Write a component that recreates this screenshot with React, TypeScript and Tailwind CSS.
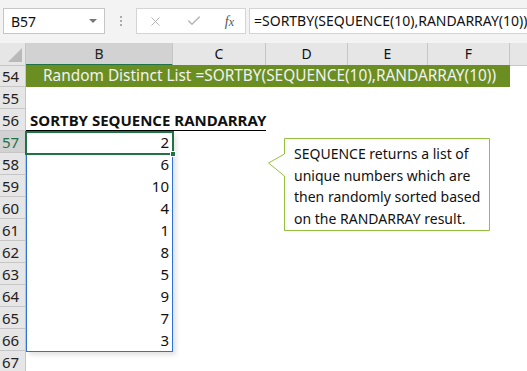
import { X, Check } from 'lucide-react'

// Spreadsheet column widths (row header, then B..F, then the cut-off G)
const cols = 'grid-cols-[26px_147px_93px_82px_80px_82px_1fr]'

const values = [2, 6, 10, 4, 1, 8, 5, 9, 7, 3]

function RowHead({ n, active }: { n: number; active?: boolean }) {
  return (
    <div
      className={
        'h-[22px] border-r border-b border-[#c6c6c6] pl-[2px] text-[15px] leading-[22px] ' +
        (active ? 'bg-[#d2d2d2] text-[#217346]' : 'bg-[#e6e6e6] text-[#222]')
      }
    >
      {n}
    </div>
  )
}

export default function App() {
  return (
    <div className="relative w-[527px] h-[371px] overflow-hidden bg-white font-['Noto_Sans',sans-serif] text-[#111]">
      {/* Formula bar */}
      <div className="h-[43px] bg-[#f3f3f3] flex items-start pt-[8px] pl-[3px]">
        <div className="w-[102px] h-[26px] bg-white border border-[#c6c6c6] flex items-center justify-between px-[7px] text-[14px]">
          <span>B57</span>
          <span className="w-0 h-0 border-l-[4px] border-r-[4px] border-t-[4px] border-l-transparent border-r-transparent border-t-[#777]" />
        </div>
        <div className="w-[31px] h-[26px] flex flex-col items-center justify-center gap-[2px]">
          <span className="w-[2px] h-[2px] bg-[#aaa]" />
          <span className="w-[2px] h-[2px] bg-[#aaa]" />
          <span className="w-[2px] h-[2px] bg-[#aaa]" />
        </div>
        <div className="w-[110px] h-[26px] bg-white border border-[#d4d4d4] flex items-center justify-between pl-[11px] pr-[11px]">
          <X className="w-[15px] h-[15px] text-[#b5b5b5]" strokeWidth={1.6} />
          <Check className="w-[16px] h-[16px] text-[#b5b5b5]" strokeWidth={2.2} />
          <span className="font-['Liberation_Serif',serif] italic text-[14px] text-[#555]">
            f<span className="text-[12px]">x</span>
          </span>
        </div>
        <div className="ml-[3px] flex-1 h-[26px] bg-white border border-[#d4d4d4] border-r-0 pl-[4px] text-[14px] leading-[24px] whitespace-nowrap overflow-hidden">
          =SORTBY(SEQUENCE(10),RANDARRAY(10))
        </div>
      </div>

      {/* Column headers */}
      <div className={'grid h-[22px] bg-[#e6e6e6] text-[14px] ' + cols}>
        <div className="relative border-r border-b border-[#c6c6c6]">
          <svg width="14" height="14" viewBox="0 0 14 14" className="absolute right-[3px] bottom-[3px]">
            <path d="M14 0 V14 H0 Z" fill="#b9b9b9" />
          </svg>
        </div>
        <div className="bg-[#d2d2d2] border-r border-[#c6c6c6] border-b-2 border-b-[#217346] text-center leading-[21px] text-[#222]">B</div>
        <div className="border-r border-b border-[#c6c6c6] text-center leading-[21px]">C</div>
        <div className="border-r border-b border-[#c6c6c6] text-center leading-[21px]">D</div>
        <div className="border-r border-b border-[#c6c6c6] text-center leading-[21px]">E</div>
        <div className="border-r border-b border-[#c6c6c6] text-center leading-[21px]">F</div>
        <div className="border-b border-[#c6c6c6]" />
      </div>

      {/* Rows */}
      <div className={'grid ' + cols}>
        <RowHead n={54} />
        <div className="col-span-5 h-[22px] bg-[#6b8e23] text-[#f2f2f2] text-[15.4px] leading-[22px] pl-[17px] whitespace-nowrap">
          Random Distinct List =SORTBY(SEQUENCE(10),RANDARRAY(10))
        </div>
        <div />

        <RowHead n={55} />
        <div className="col-span-6" />

        <RowHead n={56} />
        <div className="col-span-2 h-[22px] border-b border-black font-bold text-[15px] leading-[22px] pl-[4px] whitespace-nowrap">
          SORTBY SEQUENCE RANDARRAY
        </div>
        <div className="col-span-4" />

        {values.map((v, i) => (
          <div key={i} className="contents">
            <RowHead n={57 + i} active={i === 0} />
            <div className="h-[22px] text-right pr-[4px] text-[15px] leading-[22px]">{v}</div>
            <div className="col-span-5" />
          </div>
        ))}

        <RowHead n={67} />
        <div className="col-span-6" />
      </div>

      {/* Spill range border */}
      <div className="absolute left-[26px] top-[132px] w-[147px] h-[220px] border border-[#2f72d4] shadow-[3px_3px_5px_rgba(0,0,0,0.12)] pointer-events-none" />

      {/* Active cell B57 */}
      <div className="absolute left-[25px] top-[131px] w-[149px] h-[24px] border-2 border-[#217346] pointer-events-none">
        <span className="absolute -right-[4px] -bottom-[4px] w-[6px] h-[6px] bg-[#217346] border border-white" />
      </div>

      {/* Callout */}
      <div className="absolute left-[268px] top-[138px]">
        <svg width="224" height="94" className="absolute left-0 top-0" viewBox="0 0 224 94">
          <path
            d="M16.5 0.5 H221.5 V92.5 H16.5 V38 L0.5 25 L16.5 16 Z"
            fill="white"
            stroke="#92c140"
            strokeWidth="1"
          />
        </svg>
        <div className="relative w-[222px] pl-[26px] pr-[6px] pt-[5px] text-[14px] leading-[21.5px] text-[#111]">
          SEQUENCE returns a list of unique numbers which are then randomly sorted based on the RANDARRAY result.
        </div>
      </div>
    </div>
  )
}
